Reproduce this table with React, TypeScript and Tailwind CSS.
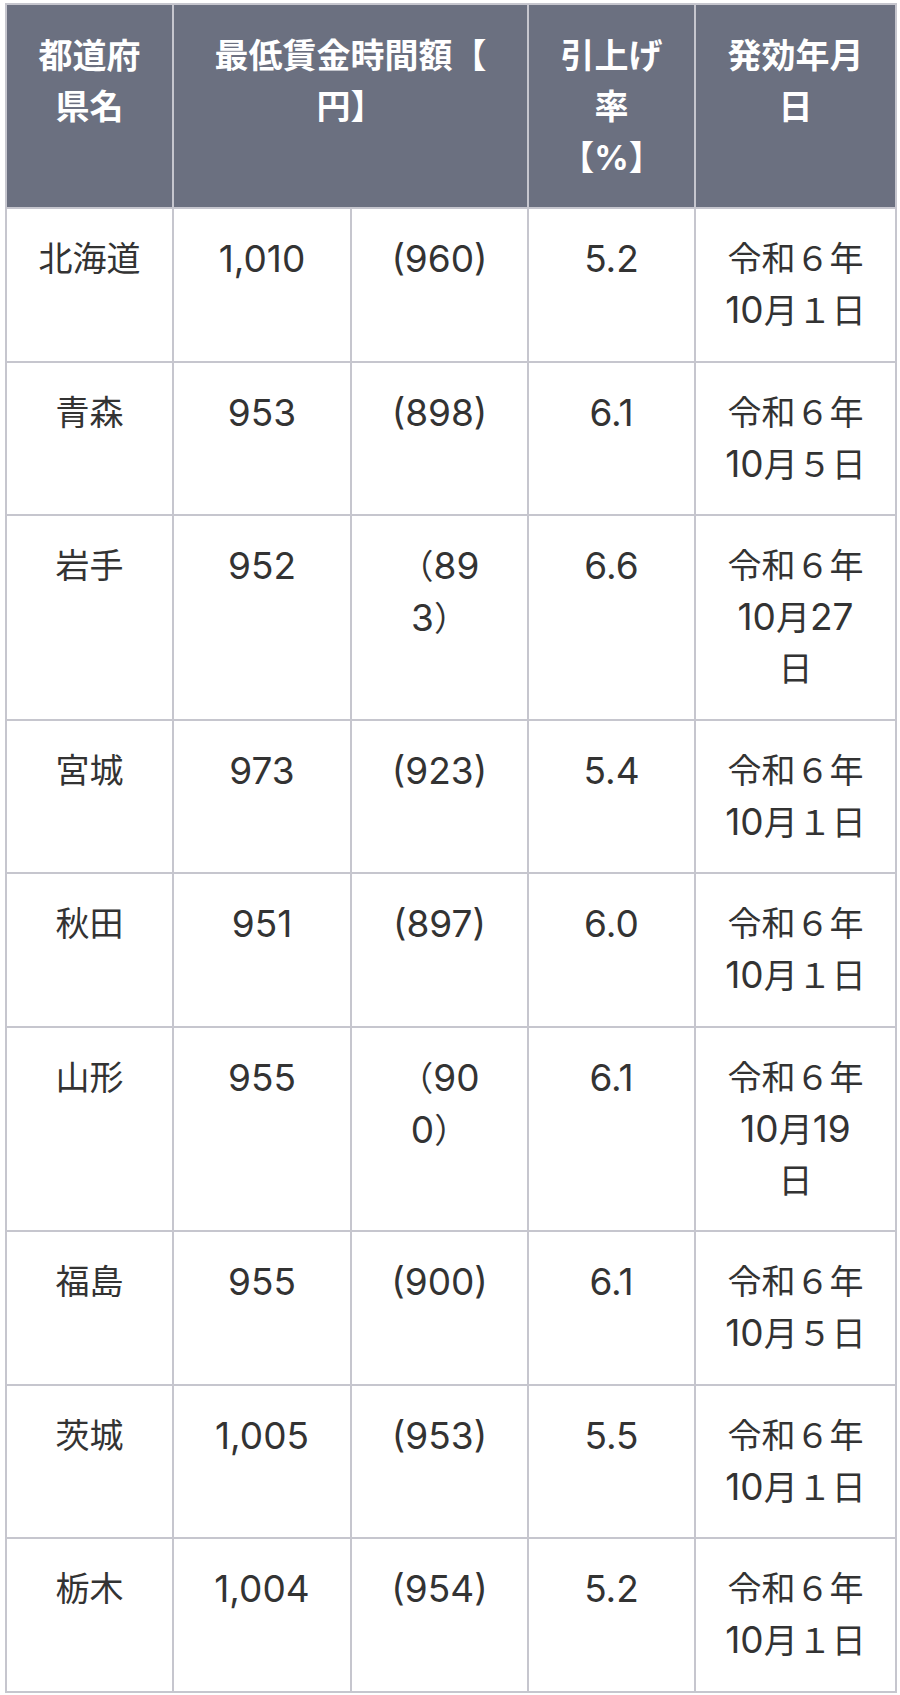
import { Fragment } from "react"

const rows: [string, string, string, string, string][] = [
  ["北海道", "1,010", "(960)", "5.2", "令和６年\n10月１日"],
  ["青森", "953", "(898)", "6.1", "令和６年\n10月５日"],
  ["岩手", "952", "（89\n3）", "6.6", "令和６年\n10月27\n日"],
  ["宮城", "973", "(923)", "5.4", "令和６年\n10月１日"],
  ["秋田", "951", "(897)", "6.0", "令和６年\n10月１日"],
  ["山形", "955", "（90\n0）", "6.1", "令和６年\n10月19\n日"],
  ["福島", "955", "(900)", "6.1", "令和６年\n10月５日"],
  ["茨城", "1,005", "(953)", "5.5", "令和６年\n10月１日"],
  ["栃木", "1,004", "(954)", "5.2", "令和６年\n10月１日"],
]

const th =
  "border-2 border-[#c6c6ce] bg-[#6b7080] px-[24px] py-[24.5px] align-top text-center font-bold text-white whitespace-pre-line"
const td =
  "border-2 border-[#c6c6ce] px-[24px] py-[24.25px] align-top text-center text-[#333] whitespace-pre-line"

// half-width digits and signs are set a little larger, as the reference font draws them
function Txt({ s }: { s: string }) {
  const parts = s.split(/([0-9.,()%]+)/)
  return (
    <>
      {parts.map((p, i) =>
        /^[0-9.,()%]+$/.test(p) ? (
          <span key={i} className="text-[37px] leading-[51px]">
            {p}
          </span>
        ) : (
          <Fragment key={i}>{p}</Fragment>
        )
      )}
    </>
  )
}

export default function App() {
  return (
    <div className="bg-white pl-[5px] pt-[3px]">
      <table
        className="w-[890px] table-fixed border-collapse text-[34px] leading-[51px]"
        style={{ fontFamily: '"Inter", "Noto Sans CJK JP", sans-serif' }}
      >
        <colgroup>
          <col className="w-[167px]" />
          <col className="w-[178px]" />
          <col className="w-[177px]" />
          <col className="w-[167px]" />
          <col className="w-[201px]" />
        </colgroup>
        <thead>
          <tr>
            <th className={th}>{"都道府\n県名"}</th>
            <th className={th} colSpan={2}>
              {"最低賃金時間額【\n円】"}
            </th>
            <th className={th}>{"引上げ\n率\n【%】"}</th>
            <th className={th}>{"発効年月\n日"}</th>
          </tr>
        </thead>
        <tbody>
          {rows.map((r) => (
            <tr key={r[0]}>
              {r.map((c, i) => (
                <td key={i} className={td}>
                  <Txt s={c} />
                </td>
              ))}
            </tr>
          ))}
        </tbody>
      </table>
    </div>
  )
}
